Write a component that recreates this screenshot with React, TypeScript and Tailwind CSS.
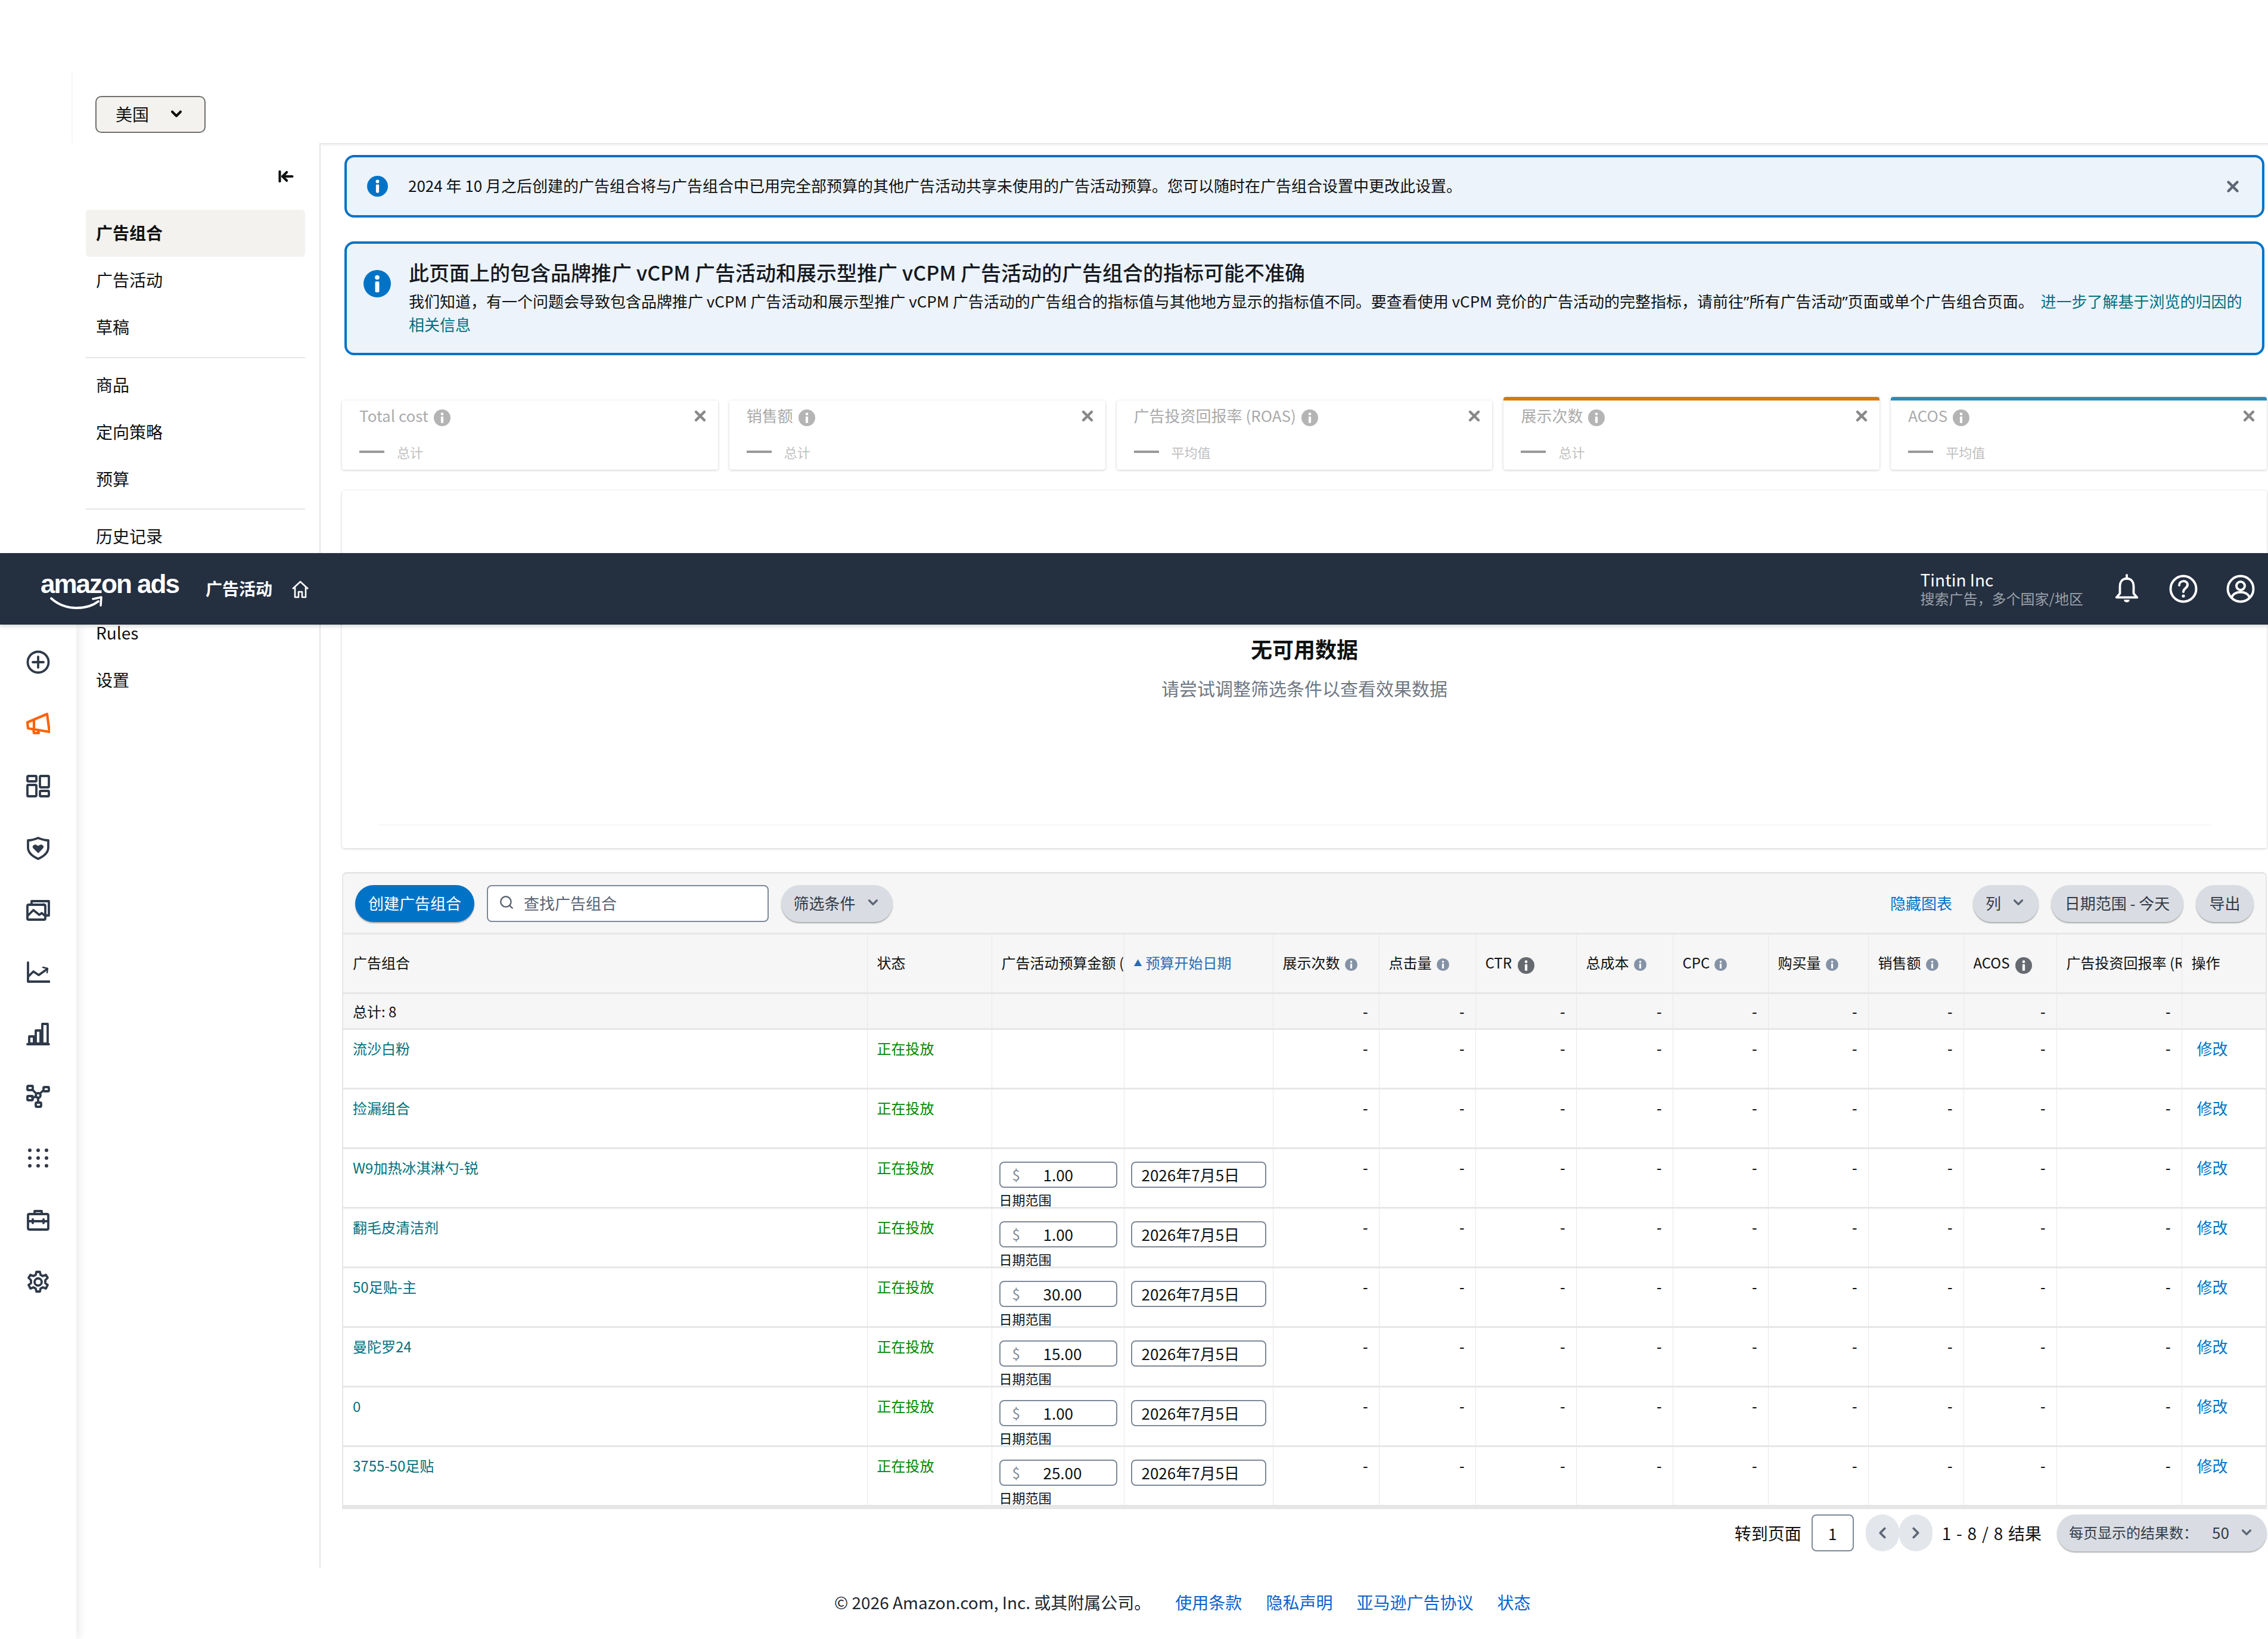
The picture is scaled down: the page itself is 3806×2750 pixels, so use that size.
import { ArrowLeftToLine, ChevronDown, ChevronLeft, ChevronRight, Search, X } from "lucide-react";

const stroke = "#2f3a4a";

function InfoIcon({ className }: { className: string }) {
  return (
    <svg viewBox="0 0 24 24" className={className}>
      <circle cx="12" cy="12" r="12" fill="currentColor" />
      <circle cx="12" cy="6.5" r="2" fill="#fff" />
      <rect x="10.2" y="10" width="3.6" height="9.5" rx="1" fill="#fff" />
    </svg>
  );
}

function RailIcon({ children, color = stroke }: { children: React.ReactNode; color?: string }) {
  return (
    <svg viewBox="0 0 40 40" width="40" height="40" fill="none" stroke={color} strokeWidth="3.8" strokeLinejoin="round" strokeLinecap="round">
      {children}
    </svg>
  );
}

const railIcons = [
  <RailIcon key="add">
    <circle cx="20" cy="20" r="17.5" />
    <path d="M20 11v18M11 20h18" />
  </RailIcon>,
  <RailIcon key="campaign" color="#ff6200">
    <path d="M2 17l33-14 4 30-36-6z" strokeWidth="4.2" />
    <path d="M12 28l1 7h8l-1-5" strokeWidth="4.2" />
    <path d="M13 14v13" strokeWidth="4.2" />
  </RailIcon>,
  <RailIcon key="layout">
    <rect x="2" y="3" width="15" height="9" rx="1.5" />
    <rect x="2" y="18" width="15" height="19" rx="1.5" />
    <rect x="23" y="3" width="15" height="19" rx="1.5" />
    <rect x="23" y="28" width="15" height="9" rx="1.5" />
  </RailIcon>,
  <RailIcon key="shield">
    <path d="M3 7c6 0 12-2 17-4 5 2 11 4 17 4v12c0 9-8 15-17 19C11 34 3 28 3 19z" />
    <path d="M20 28l-8-8c-3-4 3-8 8-3 5-5 11-1 8 3z" fill={stroke} strokeWidth="1" />
  </RailIcon>,
  <RailIcon key="images">
    <path d="M9 10V5h29v24h-6" />
    <rect x="2" y="11" width="30" height="25" rx="2" />
    <path d="M3 29l9-9 10 8 4-3 5 4" />
    <circle cx="29" cy="11" r="2.4" fill={stroke} stroke="none" />
  </RailIcon>,
  <RailIcon key="line">
    <path d="M3 4v32h36" />
    <path d="M4 27l8-8 9 6 14-10" />
    <path d="M28 12l8 2-1 7" strokeWidth="2.4" />
  </RailIcon>,
  <RailIcon key="bars">
    <path d="M2 37h36" />
    <rect x="5" y="24" width="8" height="12" />
    <rect x="16" y="14" width="8" height="22" />
    <rect x="27" y="3" width="9" height="33" />
  </RailIcon>,
  <RailIcon key="nodes">
    <rect x="2" y="3" width="9" height="7" rx="1.5" />
    <rect x="2" y="20" width="9" height="7" rx="1.5" />
    <rect x="29" y="5" width="9" height="7" rx="1.5" />
    <rect x="16" y="31" width="9" height="7" rx="1.5" />
    <circle cx="20" cy="19" r="4" />
    <path d="M10 9l7 7M10 23l7-2M29 10l-6 6M20 23v8" />
  </RailIcon>,
  <svg key="dots" viewBox="0 0 40 40" width="40" height="40" fill={stroke}>
    {[7, 20, 33].map((y) =>
      [6, 20, 34].map((x) => <circle key={`${x}-${y}`} cx={x} cy={y} r="3" />)
    )}
  </svg>,
  <RailIcon key="briefcase">
    <rect x="3" y="10" width="34" height="26" rx="2" />
    <path d="M14 10V5h12v5M3 22h34" />
    <path d="M11 19v6M29 19v6" />
  </RailIcon>,
  <RailIcon key="gear">
    <path d="M17 3h6l1 5 4 2 5-2 3 5-4 4v5l4 3-3 6-5-2-4 2-1 5h-6l-1-5-4-2-5 2-3-6 4-3v-5L4 13l3-5 5 2 4-2z" />
    <circle cx="20" cy="20" r="6" />
  </RailIcon>,
];

function NavItem({ label, active }: { label: string; active?: boolean }) {
  return (
    <div
      className={`h-[79px] flex items-center pl-[17px] pb-[3px] rounded-[6px] text-[28px] ${
        active ? "bg-[#f3f2ee] font-bold" : ""
      }`}
    >
      {label}
    </div>
  );
}

function MetricCard({ title, sub, barColor }: { title: string; sub: string; barColor?: string }) {
  return (
    <div
      className={`flex-1 rounded-[4px] bg-white shadow-[0_1px_4px_rgba(0,0,0,0.2)] flex flex-col pl-[29px] pr-[30px] ${
        barColor ? `h-[122px] ${barColor}` : "h-[116px]"
      }`}
    >
      <div className="flex items-center h-[52px] text-[26px] text-[#aaaaaa]">
        <span className="-mt-[4px]">{title}</span>
        <InfoIcon className="w-[28px] h-[28px] ml-[9px] mt-[6px] text-[#b4b4b4]" />
        <X className="ml-auto -mr-[14px] text-[#888888]" size={28} strokeWidth={3.8} />
      </div>
      <div className="flex items-center mt-[16px] text-[22px] text-[#c0c0c0]">
        <div className="w-[42px] h-[4px] bg-[#999999]" />
        <span className="ml-[21px] mt-[2px]">{sub}</span>
      </div>
    </div>
  );
}

function PillButton({ children, className = "" }: { children: React.ReactNode; className?: string }) {
  return (
    <button
      className={`h-[62px] pb-[3px] rounded-full bg-[#d9dde3] text-[26px] text-[#333b47] flex items-center justify-center shadow-[0_2px_2px_rgba(0,0,0,0.3)] whitespace-nowrap ${className}`}
    >
      {children}
    </button>
  );
}

const columns = [
  { w: "w-[879px]", label: "广告组合" },
  { w: "w-[209px]", label: "状态" },
  { w: "w-[222px]", label: "广告活动预算金额 (美元)" },
  { w: "w-[250px]", label: "预算开始日期", sort: true },
  { w: "w-[178px]", label: "展示次数", info: true },
  { w: "w-[162px]", label: "点击量", info: true },
  { w: "w-[169px]", label: "CTR", infoDark: true },
  { w: "w-[162px]", label: "总成本", info: true },
  { w: "w-[160px]", label: "CPC", info: true },
  { w: "w-[168px]", label: "购买量", info: true },
  { w: "w-[160px]", label: "销售额", info: true },
  { w: "w-[156px]", label: "ACOS", infoDark: true },
  { w: "w-[210px]", label: "广告投资回报率 (ROAS)" },
  { w: "w-[143px]", label: "操作" },
];

const rows = [
  { name: "流沙白粉" },
  { name: "捡漏组合" },
  { name: "W9加热冰淇淋勺-锐", budget: "1.00" },
  { name: "翻毛皮清洁剂", budget: "1.00" },
  { name: "50足贴-主", budget: "30.00" },
  { name: "曼陀罗24", budget: "15.00" },
  { name: "0", budget: "1.00" },
  { name: "3755-50足贴", budget: "25.00" },
];

const metricCols = Array.from({ length: 9 }, (_, i) => i);

const cell = "border-r border-[#e8e8e8]";

function Table() {
  return (
    <table className="table-fixed border-collapse w-[3225px] text-[24px] leading-[34px]">
      <colgroup>
        {columns.map((c) => (
          <col key={c.label} className={c.w} />
        ))}
      </colgroup>
      <thead>
        <tr className="h-[100px] bg-[#f6f6f6] border-t-[3px] border-b-[3px] border-[#e6e6e6]">
          {columns.map((c) => (
            <th key={c.label} className={`${cell} font-normal text-left pl-[16px] overflow-hidden`}>
              <div className="flex items-center h-[94px] pb-[3px] whitespace-nowrap overflow-hidden">
                {c.sort && <span className="text-[#2b6cb0] text-[14px] mr-[6px]">▲</span>}
                <span className={c.sort ? "text-[#2b6cb0]" : ""}>{c.label}</span>
                {c.info && <InfoIcon className="w-[21px] h-[21px] ml-[8px] mt-[6px] shrink-0 text-[#8592a6]" />}
                {c.infoDark && <InfoIcon className="w-[28px] h-[28px] ml-[10px] mt-[10px] shrink-0 text-[#666a70]" />}
              </div>
            </th>
          ))}
        </tr>
      </thead>
      <tbody>
        <tr className="h-[60px] bg-[#f6f6f6] border-b-[3px] border-[#e6e6e6]">
          <td className={`${cell} pl-[16px] align-middle`}>总计: 8</td>
          <td className={cell} />
          <td className={cell} />
          <td className={cell} />
          {metricCols.map((i) => (
            <td key={i} className={`${cell} text-right pr-[18px] font-medium align-middle`}>
              -
            </td>
          ))}
          <td className={cell} />
        </tr>
        {rows.map((r) => (
          <tr key={r.name} className="h-[100px] border-b-[3px] border-[#e6e6e6]">
            <td className={`${cell} align-top pl-[16px] pt-[14px] text-[#00717f]`}>{r.name}</td>
            <td className={`${cell} align-top pl-[16px] pt-[14px] text-[#008a00]`}>正在投放</td>
            <td className={`${cell} align-top pl-[12px] pr-[11px] pt-[21px]`}>
              {r.budget && (
                <>
                  <div className="h-[44px] rounded-[8px] border-2 border-[#7d8998] flex items-center pl-[20px] text-[26px]">
                    <span className="text-[#7d8998] w-[52px] text-[24px]">$</span>
                    <span>{r.budget}</span>
                  </div>
                  <div className="mt-[6px] text-[22px] leading-[26px]">日期范围</div>
                </>
              )}
            </td>
            <td className={`${cell} align-top pl-[11px] pr-[11px] pt-[21px]`}>
              {r.budget && (
                <div className="h-[44px] rounded-[8px] border-2 border-[#7d8998] flex items-center pl-[16px] text-[26px] whitespace-nowrap">
                  2026年7月5日
                </div>
              )}
            </td>
            {metricCols.map((i) => (
              <td key={i} className={`${cell} align-top text-right pr-[18px] pt-[14px] font-medium`}>
                -
              </td>
            ))}
            <td className={`${cell} align-top pl-[25px] pt-[14px] text-[26px] text-[#0073c7]`}>修改</td>
          </tr>
        ))}
      </tbody>
    </table>
  );
}

export default function App() {
  return (
    <div className="relative flex w-[3806px] h-[2750px] overflow-hidden bg-white text-[#0f1111] font-['Noto_Sans_CJK_SC',sans-serif]">
      {/* left rail, starts under the top bar */}
      <div className="relative z-10 w-[128px] shrink-0 mt-[1048px] bg-white shadow-[6px_0_14px_rgba(0,0,0,0.07)] flex flex-col items-center pt-[43px] gap-[64px]">
        {railIcons}
      </div>

      {/* section nav */}
      <div className="w-[410px] shrink-0 flex flex-col">
        <div className="h-[120px]" />
        <div className="h-[120px] -ml-[8px] border-l-2 border-[#f6f6f6] pt-[41px] pl-[38px]">
          <button className="w-[185px] h-[62px] pb-[2px] rounded-[10px] border-2 border-[#6f6f6f] bg-[#f3f2ee] flex items-center pl-[32px] text-[28px]">
            美国
            <ChevronDown className="ml-[32px]" size={28} strokeWidth={3.5} />
          </button>
        </div>
        <div className="h-[2390px] border-r-2 border-[#e5e5e5] pl-[16px] pr-[24px]">
          <div className="h-[112px] flex items-center justify-end pr-[18px]">
            <ArrowLeftToLine size={28} strokeWidth={3.5} />
          </div>
          <NavItem label="广告组合" active />
          <NavItem label="广告活动" />
          <NavItem label="草稿" />
          <div className="h-[2px] mt-[10px] bg-[#e5e5e5]" />
          <div className="h-[6px]" />
          <NavItem label="商品" />
          <NavItem label="定向策略" />
          <NavItem label="预算" />
          <div className="h-[2px] mt-[9px] bg-[#e5e5e5]" />
          <div className="h-[6px]" />
          <NavItem label="历史记录" />
          <div className="h-[83px]" />
          <NavItem label="Rules" />
          <NavItem label="设置" />
        </div>
      </div>

      {/* main column */}
      <div className="flex-1 min-w-0 mt-[240px] border-t-2 border-[#e8e8e8] shadow-[inset_0_4px_4px_-3px_rgba(0,0,0,0.08)] pl-[36px] pr-[2px] pt-[18px]">
        <div className="mx-[4px] h-[105px] rounded-[16px] border-4 border-[#0073c7] bg-[#ecf3fa] flex items-center pl-[34px] pr-[34px] text-[26px]">
          <InfoIcon className="w-[35px] h-[35px] shrink-0 text-[#0073c7]" />
          <span className="ml-[34px] -mt-[5px]">
            2024 年 10 月之后创建的广告组合将与广告组合中已用完全部预算的其他广告活动共享未使用的广告活动预算。您可以随时在广告组合设置中更改此设置。
          </span>
          <X className="ml-auto text-[#5d6675]" size={30} strokeWidth={3.5} />
        </div>

        <div className="mx-[4px] mt-[40px] h-[191px] rounded-[16px] border-4 border-[#0073c7] bg-[#ecf3fa] flex pl-[28px] pr-[20px] pt-[29px]">
          <InfoIcon className="w-[46px] h-[46px] mt-[15px] shrink-0 text-[#0073c7]" />
          <div className="ml-[30px]">
            <div className="text-[34px] leading-[46px] text-[#16191f] font-medium -mt-[4px]">
              此页面上的包含品牌推广 vCPM 广告活动和展示型推广 vCPM 广告活动的广告组合的指标可能不准确
            </div>
            <div className="text-[26px] leading-[38px] mt-[6px]">
              我们知道，有一个问题会导致包含品牌推广 vCPM 广告活动和展示型推广 vCPM 广告活动的广告组合的指标值与其他地方显示的指标值不同。要查看使用 vCPM 竞价的广告活动的完整指标，请前往
              <span className="font-['Noto_Sans']">”</span>所有广告活动<span className="font-['Noto_Sans']">”</span>
              页面或单个广告组合页面。{" "}
              <span className="text-[#00717f] ml-[6px]">进一步了解基于浏览的归因的相关信息</span>
            </div>
          </div>
        </div>

        <div className="mt-[70px] flex items-end gap-[19px]">
          <MetricCard title="Total cost" sub="总计" />
          <MetricCard title="销售额" sub="总计" />
          <MetricCard title="广告投资回报率 (ROAS)" sub="平均值" />
          <MetricCard title="展示次数" sub="总计" barColor="border-t-[6px] border-[#dd7701]" />
          <MetricCard title="ACOS" sub="平均值" barColor="border-t-[6px] border-[#2b8cbe]" />
        </div>

        <div className="mt-[35px] h-[600px] rounded-[4px] bg-white shadow-[0_1px_4px_rgba(0,0,0,0.2)] flex flex-col items-center pt-[241px]">
          <div className="text-[36px] leading-[48px] font-bold">无可用数据</div>
          <div className="mt-[20px] text-[30px] leading-[44px] text-[#6f7783]">请尝试调整筛选条件以查看效果数据</div>
          <div className="mt-auto mb-[38px] h-[2px] self-stretch ml-[60px] mr-[94px] bg-[#f7f7f7]" />
        </div>

        <div className="mt-[40px] rounded-t-[8px] border-l-2 border-r-2 border-t-[3px] border-b-[4px] border-[#e6e6e6] overflow-hidden">
          <div className="h-[99px] bg-[#f6f6f6] flex items-center pl-[20px] pr-[20px]">
            <PillButton className="w-[200px] !bg-[#0073c7] !text-white">创建广告组合</PillButton>
            <div className="ml-[21px] w-[473px] h-[62px] pb-[3px] rounded-[8px] border-2 border-[#7d8998] bg-white flex items-center pl-[18px] text-[26px] text-[#5a6270]">
              <Search size={26} strokeWidth={2.2} />
              <span className="ml-[16px]">查找广告组合</span>
            </div>
            <PillButton className="ml-[21px] w-[187px] gap-[16px]">
              筛选条件
              <ChevronDown size={26} strokeWidth={3} className="text-[#5d6675]" />
            </PillButton>
            <span className="ml-auto pb-[3px] text-[26px] text-[#0073c7]">隐藏图表</span>
            <PillButton className="ml-[35px] w-[110px] gap-[16px]">
              列
              <ChevronDown size={26} strokeWidth={3} className="text-[#5d6675]" />
            </PillButton>
            <PillButton className="ml-[21px] w-[222px]">日期范围 - 今天</PillButton>
            <PillButton className="ml-[21px] w-[97px]">导出</PillButton>
          </div>
          <Table />
        </div>

        <div className="mt-[9px] flex items-center justify-end text-[28px]">
          <span>转到页面</span>
          <div className="ml-[17px] w-[71px] h-[62px] rounded-[8px] border-2 border-[#7d8998] flex items-center justify-center text-[26px]">
            1
          </div>
          <div className="ml-[20px] w-[56px] h-[62px] rounded-full bg-[#e3e6eb] flex items-center justify-center">
            <ChevronLeft size={30} strokeWidth={3} className="text-[#5d6675]" />
          </div>
          <div className="w-[56px] h-[62px] rounded-full bg-[#e3e6eb] flex items-center justify-center">
            <ChevronRight size={30} strokeWidth={3} className="text-[#5d6675]" />
          </div>
          <span className="ml-[16px] [word-spacing:2.5px]">1 - 8 / 8 结果</span>
          <PillButton className="ml-[26px] w-[352px] !justify-start pl-[20px]">
            <span className="text-[24px]">每页显示的结果数：</span>
            <span className="ml-[24px]">50</span>
            <ChevronDown size={26} strokeWidth={3} className="ml-[16px] text-[#5d6675]" />
          </PillButton>
        </div>

        <div className="mt-[64px] ml-[826px] flex items-center text-[28px] text-[#1d2530]">
          <span>© 2026 Amazon.com, Inc. 或其附属公司。</span>
          <span className="ml-[41px] text-[#0b63ce]">使用条款</span>
          <span className="ml-[40px] text-[#0b63ce]">隐私声明</span>
          <span className="ml-[40px] text-[#0b63ce]">亚马逊广告协议</span>
          <span className="ml-[40px] text-[#0b63ce]">状态</span>
        </div>
      </div>

      {/* top bar lies over the page */}
      <div className="absolute z-20 left-0 top-[928px] w-full h-[120px] bg-[#242f40] shadow-[0_3px_6px_rgba(0,0,0,0.15)] flex items-center pl-[68px] pr-[22px] text-white">
        <div className="relative w-[232px] h-[70px] -mt-[6px]">
          <span className="block text-[44px] leading-[60px] font-bold tracking-[-2px] whitespace-nowrap font-['Liberation_Sans',sans-serif]">
            amazon ads
          </span>
          <svg viewBox="0 0 90 24" className="absolute left-[16px] top-[50px] w-[90px] h-[24px]" fill="none">
            <path d="M2 4c12 11 28 16 42 16 14 0 28-4 37-11" stroke="#fff" strokeWidth="4" strokeLinecap="round" />
            <path d="M72 5l14-3-1 14" stroke="#fff" strokeWidth="3.5" strokeLinecap="round" strokeLinejoin="round" />
          </svg>
        </div>
        <span className="ml-[45px] pb-[3px] text-[28px] font-bold">广告活动</span>
        <svg viewBox="0 0 30 30" className="ml-[32px] mt-[2px] w-[30px] h-[30px]" fill="none" stroke="#fff" strokeWidth="2.6" strokeLinejoin="round">
          <path d="M2 14L15 2l13 12M6 11v17h6v-9h6v9h6V11" />
        </svg>

        <div className="ml-auto flex flex-col leading-none">
          <span className="text-[28px] leading-[32px]">Tintin Inc</span>
          <span className="text-[24px] leading-[32px] text-[#9aa0a8]">搜索广告，多个国家/地区</span>
        </div>
        <svg viewBox="0 0 48 52" className="ml-[50px] w-[46px] h-[50px]" fill="none" stroke="#fff" strokeWidth="4" strokeLinejoin="round">
          <path d="M24 8c-8 0-12 6-12 14v12l-6 7h36l-6-7V22c0-8-4-14-12-14z" />
          <path d="M24 2v6" strokeLinecap="round" />
          <path d="M19 45h10c0 6-10 6-10 0z" fill="#fff" stroke="none" />
        </svg>
        <svg viewBox="0 0 48 48" className="ml-[48px] w-[48px] h-[48px]" fill="none" stroke="#fff" strokeWidth="4">
          <circle cx="24" cy="24" r="21.5" />
          <path d="M17 18c0-9 14-9 14-1 0 6-7 6-7 12" strokeLinecap="round" />
          <circle cx="24" cy="36" r="2.6" fill="#fff" stroke="none" />
        </svg>
        <svg viewBox="0 0 48 48" className="ml-[48px] w-[48px] h-[48px]" fill="none" stroke="#fff" strokeWidth="4">
          <circle cx="24" cy="24" r="21.5" />
          <circle cx="24" cy="19" r="7" />
          <path d="M9 40c1-14 29-14 30 0" />
        </svg>
      </div>
    </div>
  );
}
